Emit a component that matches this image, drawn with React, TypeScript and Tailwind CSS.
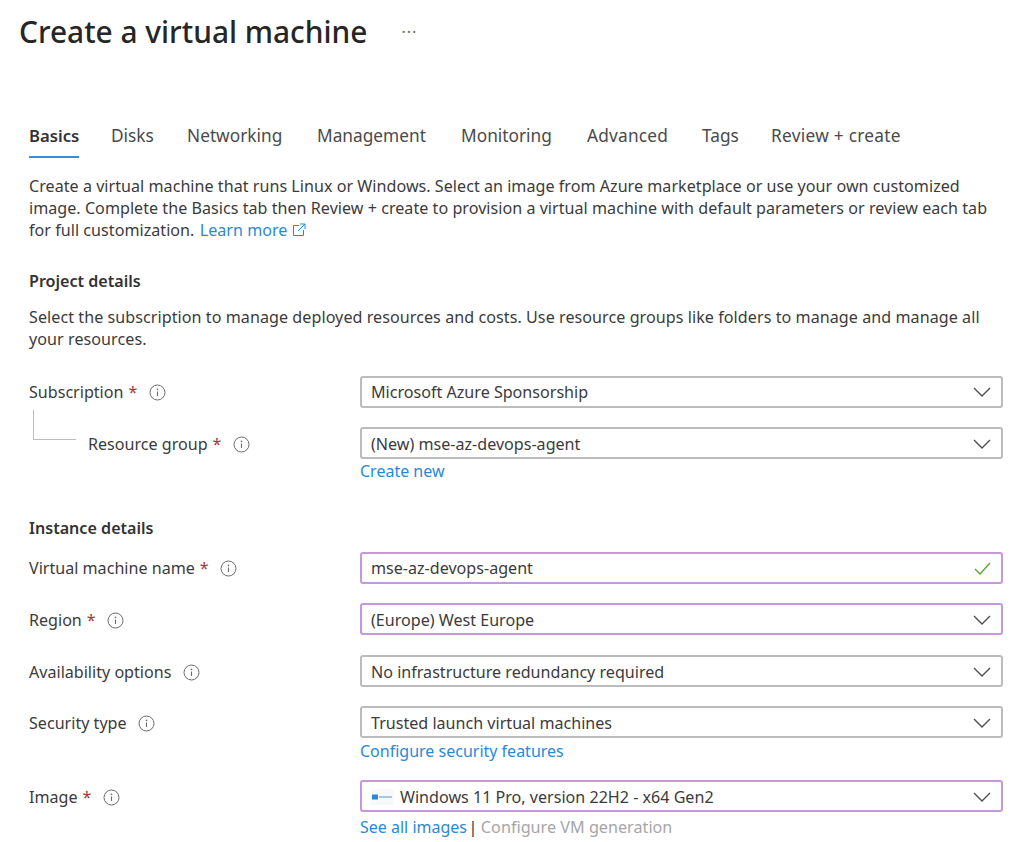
import React from "react";

function Info() {
  return (
    <svg width="17" height="17" viewBox="0 0 17 17" fill="none" className="shrink-0">
      <circle cx="8.5" cy="8.5" r="7.5" stroke="#6b6b6b" strokeWidth="1" />
      <path d="M8.5 7.5v4.5" stroke="#6b6b6b" strokeWidth="1.1" />
      <circle cx="8.5" cy="5.4" r="0.8" fill="#6b6b6b" />
    </svg>
  );
}

function Chevron() {
  return (
    <svg width="18" height="10" viewBox="0 0 18 10" fill="none" className="shrink-0">
      <path d="M1 1l8 8 8-8" stroke="#505050" strokeWidth="1.4" />
    </svg>
  );
}

function Check() {
  return (
    <svg width="17" height="13" viewBox="0 0 17 13" fill="none" className="shrink-0">
      <path d="M1 7l5 5L16 1" stroke="#5ea52f" strokeWidth="1.4" />
    </svg>
  );
}

function Label({ text, req, low }: { text: string; req?: boolean; low?: boolean }) {
  return (
    <div className={`flex items-center gap-[11.5px] ${low ? "pt-[2px]" : ""}`}>
      <span>
        {text}
        {req && <span className="text-[#a4373a] ml-[5px]">*</span>}
      </span>
      <Info />
    </div>
  );
}

function Field({
  value,
  active,
  check,
  icon,
  low,
}: {
  value: string;
  active?: boolean;
  check?: boolean;
  icon?: boolean;
  low?: boolean;
}) {
  return (
    <div
      className={`h-[32px] flex items-center justify-between pl-[9px] pr-[10px] rounded-[3px] border-2 ${
        active ? "border-[#c797dc]" : "border-[#bcbcbc]"
      } ${low ? "pt-[2px]" : ""}`}
    >
      <div className="flex items-center gap-[6px]">
        {icon && (
          <svg width="23" height="16" viewBox="0 0 23 16" className="shrink-0">
            <rect x="0" y="0" width="23" height="16" fill="#f7f9fb" />
            <rect x="1" y="5.5" width="6" height="5" fill="#2f86d6" />
            <rect x="8" y="7" width="13" height="2" fill="#a9c4de" />
          </svg>
        )}
        <span>{value}</span>
      </div>
      {check ? <Check /> : <Chevron />}
    </div>
  );
}

export default function App() {
  const tabs = [
    { t: "Disks", w: "w-[76px]" },
    { t: "Networking", w: "w-[130px]" },
    { t: "Management", w: "w-[144px]" },
    { t: "Monitoring", w: "w-[126px]" },
    { t: "Advanced", w: "w-[115px] tracking-[0.2px]" },
    { t: "Tags", w: "w-[69px]" },
    { t: "Review + create", w: "w-[140px] tracking-[0.27px]" },
  ];
  return (
    <div className="w-[1024px] h-[842px] overflow-hidden bg-white text-[#3b3b3b] font-['Open_Sans','Noto_Sans',sans-serif] text-[16.1px] leading-[22px]">
      <div className="flex items-center pl-[19px] pt-[11px] h-[41px] box-content">
        <h1 className="text-[29.85px] leading-[41px] font-medium text-[#262626]">Create a virtual machine</h1>
        <span className="ml-[34px] text-[#6b6b6b] text-[16px] leading-[16px] tracking-[1px]">···</span>
      </div>

      <div className="px-[29px]">
        <div className="flex mt-[73px] text-[#4a4a4a] text-[17.3px]">
          <div className="w-[82px]">
            <div className="w-[50px] font-semibold text-[16.7px] text-[#333] border-b-[2px] border-[#2f8fe0] h-[33px] whitespace-nowrap">
              Basics
            </div>
          </div>
          {tabs.map(({ t, w }) => (
            <div key={t} className={w}>
              {t}
            </div>
          ))}
        </div>

        <p className="mt-[17px] w-[970px] tracking-[0.03px]">
          Create a virtual machine that runs Linux or Windows. Select an image from Azure marketplace or use your own customized image. Complete the Basics tab then Review + create to provision a virtual machine with default parameters or review each tab for full customization.{" "}
          <a className="text-[#2b88d8] ml-[1px]">Learn more</a>
          <svg width="14" height="14" viewBox="0 0 14 14" fill="none" className="inline ml-[5px] align-[-1px]">
            <path d="M7 2.5H1.5v10h10V7M8 1h5v5M13 1L6 8" stroke="#2b88d8" strokeWidth="1" />
          </svg>
        </p>

        <h2 className="font-semibold text-[#333] mt-[29px]">Project details</h2>
        <p className="mt-[14px] w-[970px] tracking-[0.06px]">
          Select the subscription to manage deployed resources and costs. Use resource groups like folders to manage and manage all your resources.
        </p>

        <div className="grid grid-cols-[331px_643px] mt-[26px] items-center">
          <Label text="Subscription" req />
          <Field value="Microsoft Azure Sponsorship" />
        </div>

        <div className="grid grid-cols-[331px_643px] mt-[19px] items-center relative">
          <div className="absolute left-[4px] top-[-17px] w-[43px] h-[30px] border-l border-b border-[#bdbdbd]" />
          <div className="pl-[59px]">
            <Label text="Resource group" req low />
          </div>
          <Field value="(New) mse-az-devops-agent" low />
        </div>
        <div className="grid grid-cols-[331px_643px] text-[16px]">
          <div />
          <a className="text-[#2b88d8] mt-[1px]">Create new</a>
        </div>

        <h2 className="font-semibold text-[#333] mt-[35px]">Instance details</h2>

        <div className="grid grid-cols-[331px_643px] mt-[13px] items-center">
          <Label text="Virtual machine name" req />
          <Field value="mse-az-devops-agent" active check />
        </div>
        <div className="grid grid-cols-[331px_643px] mt-[19px] items-center">
          <Label text="Region" req low />
          <Field value="(Europe) West Europe" active low />
        </div>
        <div className="grid grid-cols-[331px_643px] mt-[20px] items-center">
          <Label text="Availability options" low />
          <Field value="No infrastructure redundancy required" low />
        </div>
        <div className="grid grid-cols-[331px_643px] mt-[19px] items-center">
          <Label text="Security type" low />
          <Field value="Trusted launch virtual machines" low />
        </div>
        <div className="grid grid-cols-[331px_643px] text-[16px]">
          <div />
          <a className="text-[#2b88d8] mt-[2px]">Configure security features</a>
        </div>
        <div className="grid grid-cols-[331px_643px] mt-[18px] items-center">
          <Label text="Image" req low />
          <Field value="Windows 11 Pro, version 22H2 - x64 Gen2" active icon low />
        </div>
        <div className="grid grid-cols-[331px_643px]">
          <div />
          <div className="mt-[4px] flex">
            <a className="text-[#2b88d8] text-[16px]">See all images</a>
            <span className="text-[#333] ml-[1.5px] mr-[3.5px]">|</span>
            <span className="text-[#a6a6a6] text-[16.2px]">Configure VM generation</span>
          </div>
        </div>
      </div>
    </div>
  );
}
